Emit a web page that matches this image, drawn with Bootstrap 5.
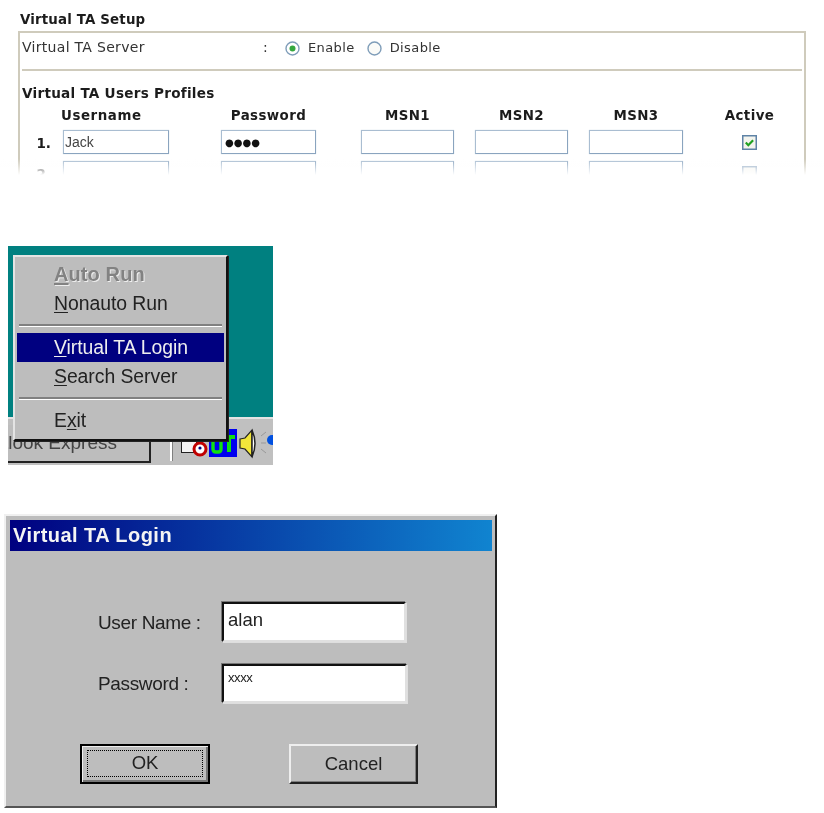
<!doctype html>
<html lang="en"><head><meta charset="utf-8"><title>Virtual TA</title>
<link href="https://cdn.jsdelivr.net/npm/bootstrap@5.3.0/dist/css/bootstrap.min.css" rel="stylesheet">
<style>
body{margin:0;background:#fff;width:824px;height:813px;overflow:hidden;color:#222;font-family:"DejaVu Sans",sans-serif}
.ta-wrap{height:180px;position:relative;padding:13px 0 0 18px;overflow:hidden;filter:blur(.35px)}
.ta-head{font-size:13.4px;font-weight:700;line-height:14px;margin:0 0 4px 2px;color:#1c1c1c;letter-spacing:.15px}
.ta-box{width:788px;height:150px;border:2px solid #cfcbbc;border-bottom:0;padding:0 0 0 2px}
.ta-server{height:38px;width:780px;border-bottom:2px solid #cfcbbc;font-size:14px;color:#333;padding-top:6px;line-height:16px;letter-spacing:.3px}
.ta-server .lab{width:241px}.ta-server .col-sep{width:22px}
.ta-opts{font-size:13px;letter-spacing:.4px;margin-top:1px}
.ta-server .opt{margin-right:12px}
.ta-sub{font-size:13.6px;font-weight:700;line-height:14px;margin:15px 0 1px 0;color:#1c1c1c;letter-spacing:.25px}
.ta-grid{display:grid;grid-template-columns:43px 106px 52px 95px 45px 93px 21px 93px 21px 94px 59px 15px;align-items:center;row-gap:7px;margin-left:-2px}
.ta-th{font-size:13.4px;font-weight:700;text-align:center;line-height:16px;color:#1c1c1c;white-space:nowrap;letter-spacing:.4px;padding-top:7px;margin-bottom:-1px}
.ta-th-left{text-align:left;margin-left:-2px;letter-spacing:.55px}
.ta-th-wide{margin-left:-20px;margin-right:-20px}
.ta-no{font-size:13.5px;font-weight:700;text-align:right;padding-right:12px;padding-top:3px;color:#1c1c1c}
.ta-in{display:block;width:100%;height:24px;border:1px solid #8aa4bf;border-top-color:#a9bdd1;border-left-color:#a9bdd1;background:#fff;font-size:14px;padding:0 1px;line-height:22px;font-family:"Liberation Sans",sans-serif;color:#444;outline:0;box-shadow:0 0 1px #c3d2e0}
.ta-pw{font-size:10px;color:#111;padding-left:3px;font-family:"DejaVu Sans",sans-serif}
.ta-chk{display:block}
.ta-fade{position:absolute;left:0;right:0;bottom:5px;height:16px;background:linear-gradient(to bottom,rgba(255,255,255,0),#fff)}
.ta-blank{position:absolute;left:0;right:0;bottom:0;height:5px;background:#fff}

.shot{margin:66px 0 0 8px;width:265px;height:219px;position:relative;background:#008080;overflow:hidden;font-family:"Liberation Sans",sans-serif;filter:blur(.45px)}
.desk{height:171px}
.tbar{height:48px;background:#c0c0c0;border-top:2px solid #e3e3e3;padding-top:6px;display:flex}
.tbtn{width:143px;height:38px;background:#bdbdbd;border-right:2px solid #222;border-bottom:2px solid #222;overflow:hidden;text-align:right;font-size:19px;line-height:36px;padding-right:32px;color:#444;white-space:nowrap;direction:rtl;flex:none}
.tsep{width:3px;margin-left:19px;height:36px;border-left:2px solid #fff;border-right:1px solid #808080;flex:none}
.tray{margin-left:5px;height:34px;display:block;flex:none}
.wmenu{position:absolute;left:5px;top:9px;width:215px;height:186px;background:#bdbdbd;border:2px solid;border-color:#e4e4e4 #111 #111 #e4e4e4;padding:3px 2px 2px;box-shadow:1px 1px 0 #222;font-size:19.4px;color:#222}
.wi{height:29px;line-height:29px;padding-left:37px;margin:0;white-space:nowrap;letter-spacing:-.05px}
.wi u{text-underline-offset:2px}
.wi-dis{font-weight:700;color:#828282;text-shadow:1px 1px 0 #eee;font-size:20px;letter-spacing:.1px}
.wi-on{background:#000080;color:#eee}
.wsep{border-top:2px solid #808080;border-bottom:1px solid #fff;height:3px;margin:6px 2px}

.dlg{margin:49px 0 0 4px;width:493px;height:294px;background:#bdbdbd;border:2px solid;border-color:#f0f0f0 #222 #555 #f0f0f0;padding:4px;font-family:"Liberation Sans",sans-serif;color:#222;filter:blur(.35px)}
.dlg-title{height:31px;background:linear-gradient(to right,#000080,#1084d0);color:#f4f4f4;font-weight:700;font-size:20px;line-height:31px;padding-left:3px;letter-spacing:.45px;width:482px}
.dlg-row{display:flex;align-items:center;padding-left:88px}
.dlg-lab{width:124px;font-size:19px;letter-spacing:-.35px;padding-top:2px}
.dlg-in{height:40px;border:2px solid;border-color:#111 #e0e0e0 #e0e0e0 #111;box-shadow:-1px -1px 0 #777,1px 1px 0 #dedede;outline:0;background:#fff;font-size:18.5px;padding:0 4px 5px;line-height:30px;color:#222;font-family:"Liberation Sans",sans-serif}
.dlg-u{width:184px}
.dlg-p{width:185px;height:39px;padding:0 4px 12px;line-height:16px;font-size:13px;letter-spacing:-.4px}
.dlg-btns{display:flex;padding-left:70px;margin-top:41px}
.wbtn{height:40px;background:#bdbdbd;font-size:18.5px;color:#222;padding:0;font-family:"Liberation Sans",sans-serif;text-align:center;line-height:32px;border-radius:0}
.wbtn-ok{width:130px;border:2px solid #000;box-shadow:inset 1px 1px 0 #eee,inset -2px -2px 0 #777;padding:4px 5px 5px}
.wbtn-ok span{display:block;height:100%;border:1px dotted #000;line-height:24px}
.wbtn-c{width:129px;margin-left:79px;border:2px solid;border-color:#eee #222 #222 #eee;box-shadow:inset -1px -1px 0 #808080}
</style></head><body>
<section class="ta-wrap">
  <h1 class="ta-head">Virtual TA Setup</h1>
  <div class="ta-box">
    <div class="ta-server d-flex align-items-start">
      <span class="lab">Virtual TA Server</span><span class="col-sep">:</span>
      <span class="d-inline-flex align-items-center gap-2 opt ta-opts"><svg width="15" height="15" viewBox="0 0 15 15"><circle cx="7.5" cy="7.5" r="6.5" fill="#fff" stroke="#7f9db9" stroke-width="1.4"/><circle cx="7.5" cy="7.5" r="3" fill="#35a83f"/></svg>Enable</span>
      <span class="d-inline-flex align-items-center gap-2 ta-opts"><svg width="15" height="15" viewBox="0 0 15 15"><circle cx="7.5" cy="7.5" r="6.5" fill="#fbfbf8" stroke="#7f9db9" stroke-width="1.4"/></svg>Disable</span>
    </div>
    <h2 class="ta-sub">Virtual TA Users Profiles</h2>
    <div class="ta-grid">
      <span></span><span class="ta-th ta-th-left">Username</span><span></span><span class="ta-th">Password</span><span></span><span class="ta-th">MSN1</span><span></span><span class="ta-th">MSN2</span><span></span><span class="ta-th">MSN3</span><span></span><span class="ta-th ta-th-wide">Active</span>
      <span class="ta-no">1.</span><input class="ta-in" value="Jack"><span></span><input class="ta-in ta-pw" value="●●●●"><span></span><input class="ta-in"><span></span><input class="ta-in"><span></span><input class="ta-in"><span></span>
      <svg class="ta-chk" width="15" height="15" viewBox="0 0 15 15"><rect x=".75" y=".75" width="13.5" height="13.5" fill="#f4f4ee" stroke="#5f83a6" stroke-width="1.5"/><path d="M3.8 7.6l2.5 2.6 4.8-5" fill="none" stroke="#21a121" stroke-width="2.2"/></svg>
      <span class="ta-no">2.</span><input class="ta-in"><span></span><input class="ta-in"><span></span><input class="ta-in"><span></span><input class="ta-in"><span></span><input class="ta-in"><span></span>
      <svg class="ta-chk" width="15" height="15" viewBox="0 0 15 15"><rect x=".75" y=".75" width="13.5" height="13.5" fill="#f4f4ee" stroke="#8aa4bf" stroke-width="1.5"/></svg>
    </div>
  </div>
  <div class="ta-fade"></div><div class="ta-blank"></div>
</section>

<section class="shot">
  <div class="desk"></div>
  <div class="tbar">
    <div class="tbtn">Outlook Express</div>
    <div class="tsep"></div>
    <svg class="tray" width="95" height="34" viewBox="0 0 95 34">
      <rect x="3.5" y="15.5" width="15" height="12" fill="#f4f4f4" stroke="#222"/>
      <circle cx="22" cy="24" r="6" fill="#fff" stroke="#c00000" stroke-width="3"/><circle cx="22" cy="23" r="1.6" fill="#000080"/>
      <rect x="31" y="4" width="28" height="28" fill="#0000f0"/>
      <path d="M35 13v11q0 3 3 3h2q3 0 3-3v-11" fill="none" stroke="#10e010" stroke-width="3.4"/>
      <path d="M46 12h11M51 12v15" fill="none" stroke="#10e010" stroke-width="4"/>
      <path d="M62 14l5-1 7-8v27l-7-8-5-1z" fill="#f2e63a" stroke="#222" stroke-width="1.2"/>
      <path d="M74 5q6 13.500 0 27z" fill="#fff" stroke="#222" stroke-width="1.5"/>
      <path d="M83 11l5-4M83 18h5M83 24l5 4" stroke="#999" stroke-width="1"/>
      <circle cx="94" cy="15" r="5" fill="#0050e0"/>
    </svg>
  </div>
  <div class="wmenu">
    <div class="wi wi-dis"><u>A</u>uto Run</div>
    <div class="wi"><u>N</u>onauto Run</div>
    <div class="wsep"></div>
    <div class="wi wi-on"><u>V</u>irtual TA Login</div>
    <div class="wi"><u>S</u>earch Server</div>
    <div class="wsep"></div>
    <div class="wi">E<u>x</u>it</div>
  </div>
</section>

<section class="dlg">
  <div class="dlg-title">Virtual TA Login</div>
  <div class="dlg-row" style="margin-top:51px"><span class="dlg-lab">User Name :</span><input class="dlg-in dlg-u" value="alan"></div>
  <div class="dlg-row" style="margin-top:22px"><span class="dlg-lab">Password :</span><input class="dlg-in dlg-p" value="xxxx"></div>
  <div class="dlg-btns">
    <button class="wbtn wbtn-ok" type="button"><span>OK</span></button>
    <button class="wbtn wbtn-c" type="button">Cancel</button>
  </div>
</section>
<script src="https://cdn.jsdelivr.net/npm/bootstrap@5.3.0/dist/js/bootstrap.bundle.min.js"></script>
</body></html>
